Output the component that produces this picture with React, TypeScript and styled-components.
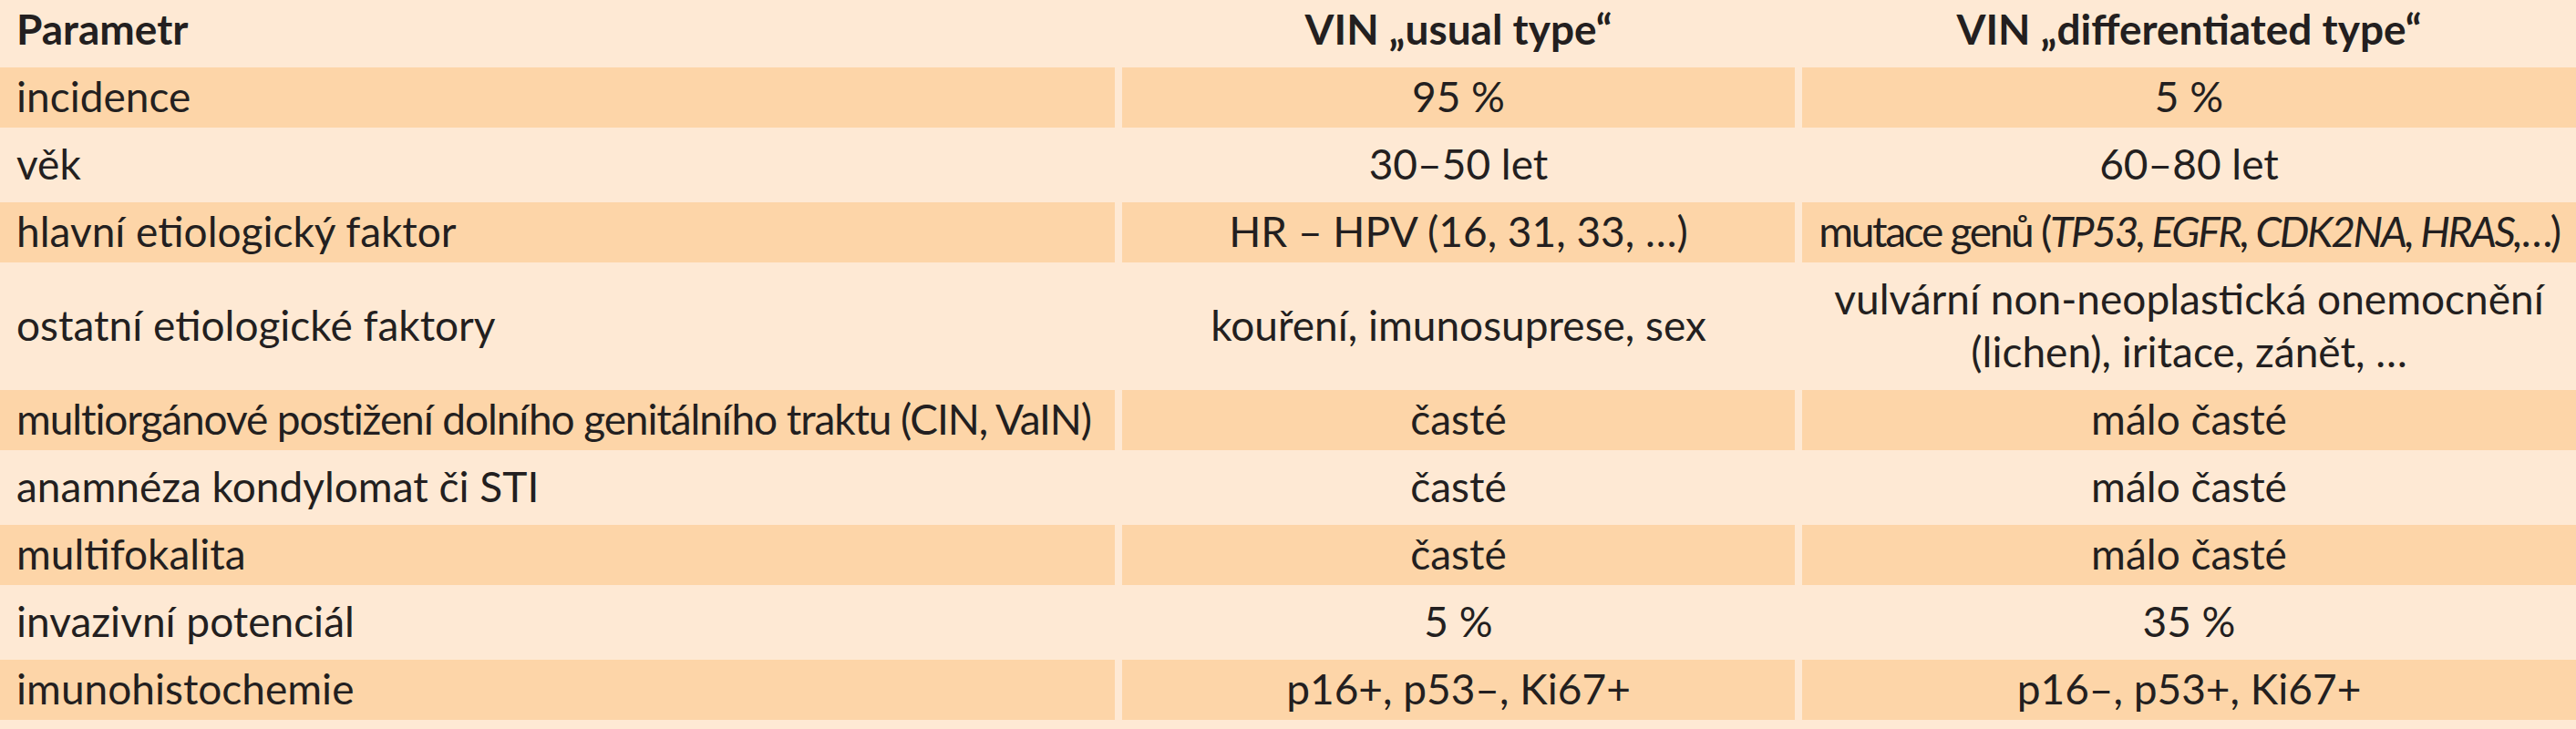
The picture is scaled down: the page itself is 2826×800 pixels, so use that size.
import React from 'react';
import styled, { createGlobalStyle } from 'styled-components';

const GlobalStyle = createGlobalStyle`
  html, body {
    margin: 0;
    padding: 0;
    background: #fee9d4;
  }
  body {
    font-family: Lato, "Open Sans", "DejaVu Sans", sans-serif;
    color: #231f20;
  }
`;

const Table = styled.div`
  width: 2826px;
  display: grid;
  grid-template-columns: 1223px 738px 1fr;
  column-gap: 8px;
  row-gap: 8px;
  background: #fee9d4;
`;

const Row = styled.div`
  display: contents;
`;

const Cell = styled.div<{ $dark?: boolean; $center?: boolean; $head?: boolean; $tight?: number }>`
  background: ${(p) => (p.$dark ? '#fdd5a8' : 'transparent')};
  text-align: ${(p) => (p.$center ? 'center' : 'left')};
  font-weight: ${(p) => (p.$head ? 700 : 400)};
  letter-spacing: ${(p) => (p.$tight ? `${p.$tight}px` : 'normal')};
  font-size: 46px;
  line-height: 58px;
  padding: ${(p) => (p.$center ? '3px 0 5px' : '3px 18px 5px')};
  display: flex;
  flex-direction: column;
  justify-content: center;
  white-space: nowrap;
`;

const Em = styled.i`
  font-style: italic;
`;

type Line = {
  param: string;
  usual: React.ReactNode;
  diff: React.ReactNode;
  paramTight?: number;
  diffTight?: number;
};

const lines: Line[] = [
  { param: 'incidence', usual: '95 %', diff: '5 %' },
  { param: 'věk', usual: '30–50 let', diff: '60–80 let' },
  {
    param: 'hlavní etiologický faktor',
    usual: 'HR – HPV (16, 31, 33, …)',
    diff: (
      <span>
        mutace genů (<Em>TP53, EGFR, CDK2NA, HRAS,</Em>…)
      </span>
    ),
    diffTight: -2.3,
  },
  {
    param: 'ostatní etiologické faktory',
    usual: 'kouření, imunosuprese, sex',
    diff: (
      <span>
        vulvární non-neoplastická onemocnění
        <br />
        (lichen), iritace, zánět, …
      </span>
    ),
  },
  {
    param: 'multiorgánové postižení dolního genitálního traktu (CIN, VaIN)',
    usual: 'časté',
    diff: 'málo časté',
    paramTight: -1.1,
  },
  { param: 'anamnéza kondylomat či STI', usual: 'časté', diff: 'málo časté' },
  { param: 'multifokalita', usual: 'časté', diff: 'málo časté' },
  { param: 'invazivní potenciál', usual: '5 %', diff: '35 %' },
  { param: 'imunohistochemie', usual: 'p16+, p53–, Ki67+', diff: 'p16–, p53+, Ki67+' },
];

const App: React.FC = () => {
  return (
    <>
      <GlobalStyle />
      <Table>
        <Row>
          <Cell $head>Parametr</Cell>
          <Cell $head $center>VIN „usual type“</Cell>
          <Cell $head $center>VIN „differentiated type“</Cell>
        </Row>
        {lines.map((l, i) => {
          const dark = i % 2 === 0;
          return (
            <Row key={l.param}>
              <Cell $dark={dark} $tight={l.paramTight}>{l.param}</Cell>
              <Cell $dark={dark} $center>{l.usual}</Cell>
              <Cell $dark={dark} $center $tight={l.diffTight}>{l.diff}</Cell>
            </Row>
          );
        })}
      </Table>
    </>
  );
};

export default App;
